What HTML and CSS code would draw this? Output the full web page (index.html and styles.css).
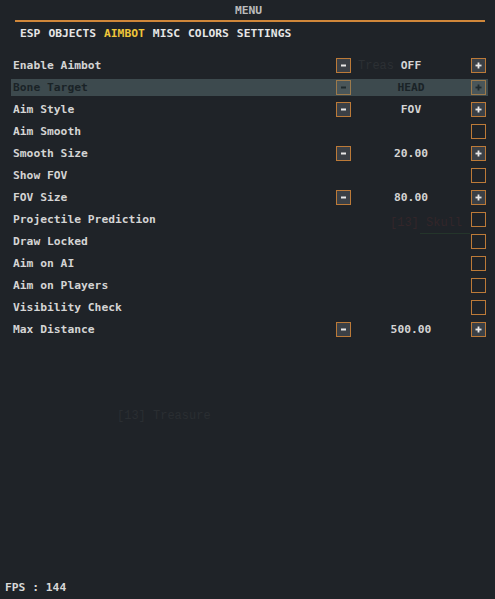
FILE: index.html
```html
<!DOCTYPE html>
<html>
<head>
<meta charset="utf-8">
<link rel="stylesheet" href="styles.css">
</head>
<body>
<div class="page">
  <div class="world">
    <span class="ghost g1">Treas</span>
    <span class="ghost g2">[13] Skull</span>
    <span class="ghost-line"></span>
    <span class="ghost g3">[13] Treasure</span>
    <svg class="cursor" width="12" height="12" viewBox="0 0 12 12"><path d="M1 1 L1 8 L3 6 L5 10 L6.5 9.3 L4.6 5.5 L7.5 5.5 Z" fill="#ffffff" stroke="#222" stroke-width="0.8"/></svg>
  </div>
  <div class="header">MENU</div>
  <div class="rule"></div>
  <nav class="tabs">
    <span class="tab">ESP</span>
    <span class="tab">OBJECTS</span>
    <span class="tab active">AIMBOT</span>
    <span class="tab">MISC</span>
    <span class="tab">COLORS</span>
    <span class="tab">SETTINGS</span>
  </nav>
  <div class="rows">
    <div class="row"><span class="label">Enable Aimbot</span><span class="btn minus"><svg width="7" height="7" viewBox="0 0 7 7"><rect x="1" y="2.5" width="5" height="2" fill="currentColor"/></svg></span><span class="value">OFF</span><span class="btn plus"><svg width="7" height="7" viewBox="0 0 7 7"><rect x="0.5" y="2.6" width="6" height="1.8" fill="currentColor"/><rect x="2.6" y="0.5" width="1.8" height="6" fill="currentColor"/></svg></span></div>
    <div class="row selected"><span class="label">Bone Target</span><span class="btn minus"><svg width="7" height="7" viewBox="0 0 7 7"><rect x="1" y="2.5" width="5" height="2" fill="currentColor"/></svg></span><span class="value">HEAD</span><span class="btn plus"><svg width="7" height="7" viewBox="0 0 7 7"><rect x="0.5" y="2.6" width="6" height="1.8" fill="currentColor"/><rect x="2.6" y="0.5" width="1.8" height="6" fill="currentColor"/></svg></span></div>
    <div class="row"><span class="label">Aim Style</span><span class="btn minus"><svg width="7" height="7" viewBox="0 0 7 7"><rect x="1" y="2.5" width="5" height="2" fill="currentColor"/></svg></span><span class="value">FOV</span><span class="btn plus"><svg width="7" height="7" viewBox="0 0 7 7"><rect x="0.5" y="2.6" width="6" height="1.8" fill="currentColor"/><rect x="2.6" y="0.5" width="1.8" height="6" fill="currentColor"/></svg></span></div>
    <div class="row"><span class="label">Aim Smooth</span><span class="check"></span></div>
    <div class="row"><span class="label">Smooth Size</span><span class="btn minus"><svg width="7" height="7" viewBox="0 0 7 7"><rect x="1" y="2.5" width="5" height="2" fill="currentColor"/></svg></span><span class="value">20.00</span><span class="btn plus"><svg width="7" height="7" viewBox="0 0 7 7"><rect x="0.5" y="2.6" width="6" height="1.8" fill="currentColor"/><rect x="2.6" y="0.5" width="1.8" height="6" fill="currentColor"/></svg></span></div>
    <div class="row"><span class="label">Show FOV</span><span class="check"></span></div>
    <div class="row"><span class="label">FOV Size</span><span class="btn minus"><svg width="7" height="7" viewBox="0 0 7 7"><rect x="1" y="2.5" width="5" height="2" fill="currentColor"/></svg></span><span class="value">80.00</span><span class="btn plus"><svg width="7" height="7" viewBox="0 0 7 7"><rect x="0.5" y="2.6" width="6" height="1.8" fill="currentColor"/><rect x="2.6" y="0.5" width="1.8" height="6" fill="currentColor"/></svg></span></div>
    <div class="row"><span class="label">Projectile Prediction</span><span class="check"></span></div>
    <div class="row"><span class="label">Draw Locked</span><span class="check"></span></div>
    <div class="row"><span class="label">Aim on AI</span><span class="check"></span></div>
    <div class="row"><span class="label">Aim on Players</span><span class="check"></span></div>
    <div class="row"><span class="label">Visibility Check</span><span class="check"></span></div>
    <div class="row"><span class="label">Max Distance</span><span class="btn minus"><svg width="7" height="7" viewBox="0 0 7 7"><rect x="1" y="2.5" width="5" height="2" fill="currentColor"/></svg></span><span class="value">500.00</span><span class="btn plus"><svg width="7" height="7" viewBox="0 0 7 7"><rect x="0.5" y="2.6" width="6" height="1.8" fill="currentColor"/><rect x="2.6" y="0.5" width="1.8" height="6" fill="currentColor"/></svg></span></div>
  </div>
  <div class="fps">FPS : 144</div>
</div>
</body>
</html>
```

FILE: styles.css
```css
html, body {
  margin: 0;
  padding: 0;
  background: #1f2328;
}
body {
  font-family: "DejaVu Sans Mono", "Liberation Mono", monospace;
  font-weight: bold;
  font-size: 11.3px;
  color: #d4d4d4;
}
.page {
  position: relative;
  width: 495px;
  height: 599px;
  display: flex;
  flex-direction: column;
  overflow: hidden;
}
.world {
  position: absolute;
  inset: 0;
  pointer-events: none;
}
.ghost {
  position: absolute;
  font-family: "Liberation Mono", monospace;
  font-weight: normal;
  font-size: 12px;
  color: #2b2f33;
  white-space: nowrap;
}
.g1 { left: 358px; top: 59px; color: #2c3034; }
.g2 { left: 390px; top: 216px; color: #33262a; }
.g3 { left: 117px; top: 409px; color: #2a2e32; }
.ghost-line {
  position: absolute;
  left: 420px;
  top: 233px;
  width: 50px;
  height: 1px;
  background: #24352b;
}
.cursor {
  position: absolute;
  left: 424px;
  top: 83px;
}
.header {
  height: 20px;
  line-height: 22px;
  text-align: center;
  color: #bcbcbc;
  padding-left: 2px;
  position: relative;
}
.rule {
  height: 2px;
  margin-left: 15px;
  width: 470px;
  background: #d0873a;
  position: relative;
}
.tabs {
  display: flex;
  gap: 8px;
  padding: 5px 0 0 20px;
  line-height: 14px;
  position: relative;
}
.tab { color: #e6e6e6; }
.tab.active { color: #f0c63a; }
.rows {
  margin-top: 16px;
  margin-left: 11px;
  width: 477px;
  display: flex;
  flex-direction: column;
  gap: 5px;
  position: relative;
}
.row {
  height: 17px;
  display: grid;
  grid-template-columns: 1fr 15px 120px 15px;
  align-items: center;
  padding: 0 2px 0 2px;
}
.label {
  grid-column: 1;
  line-height: 17px;
}
.value {
  text-align: center;
  line-height: 17px;
}
.btn, .check {
  width: 15px;
  height: 15px;
  box-sizing: border-box;
  border: 1.5px solid #bc7a38;
  display: flex;
  align-items: center;
  justify-content: center;
}
.btn {
  background: #3b4046;
  color: #e8e8e8;
}
.check {
  grid-column: 4;
  background: transparent;
}
.row.selected {
  background: #3d4a4e;
  color: #1a2327;
}
.row.selected .btn {
  background: #4a5659;
  border-color: #9c7a4c;
  color: #1f2a2d;
}
.fps {
  margin-top: auto;
  padding: 0 0 4px 5px;
  line-height: 14px;
  color: #d8d8d8;
  position: relative;
}
```
